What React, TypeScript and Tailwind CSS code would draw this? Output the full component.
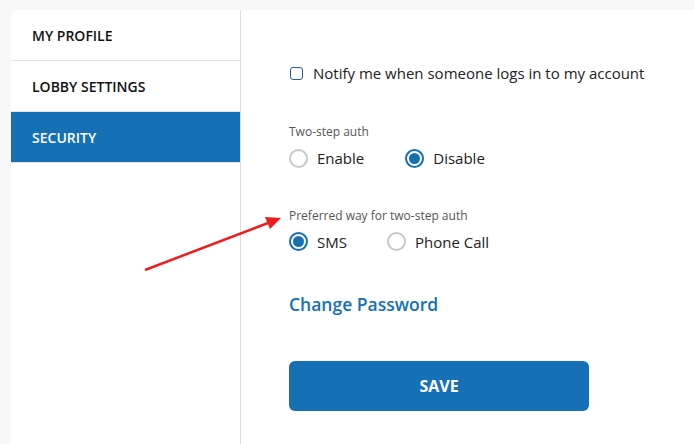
import React from "react";

const font = { fontFamily: '"Open Sans", "Noto Sans", sans-serif' };

function Radio({ checked, label, className = "" }: { checked: boolean; label: string; className?: string }) {
  return (
    <div className={`flex items-center ${className}`}>
      {checked ? (
        <span className="w-[19px] h-[19px] rounded-full border-2 border-[#1570b5] flex items-center justify-center">
          <span className="w-[11px] h-[11px] rounded-full bg-[#1570b5]" />
        </span>
      ) : (
        <span className="w-[19px] h-[19px] rounded-full border-2 border-[#c8c8c8]" />
      )}
      <span className="ml-[9px] text-[15px] text-[#222]">{label}</span>
    </div>
  );
}

export default function App() {
  return (
    <div className="relative w-[694px] h-[444px] bg-[#f8f8f8] overflow-hidden" style={font}>
      <div className="ml-[11px] mt-[10px] h-[434px] bg-white rounded-tl-[8px] flex">
        <div className="w-[230px] border-r border-[#dddddd] flex flex-col">
          <div className="h-[51px] border-b border-[#e2e2e2] flex items-center pl-[21px] text-[14px] font-semibold text-[#111]">MY PROFILE</div>
          <div className="h-[51px] border-b border-[#e2e2e2] flex items-center pl-[21px] text-[14px] font-semibold text-[#111]">LOBBY SETTINGS</div>
          <div className="h-[51px] border-b border-[#e2e2e2] bg-[#1570b5] flex items-center pl-[21px] text-[14px] font-semibold text-white">SECURITY</div>
        </div>
        <div className="flex-1 pl-[48px] pt-[52px] flex flex-col">
          <div className="flex items-center h-[22px]">
            <span className="w-[13px] h-[13px] ml-[1px] rounded-[3px] border-[1.5px] border-[#2a5d8f]" />
            <span className="ml-[10px] text-[15px] text-[#222]">Notify me when someone logs in to my account</span>
          </div>
          <div className="mt-[39px] text-[12px] text-[#555]">Two-step auth</div>
          <div className="mt-[6px] flex items-center">
            <Radio checked={false} label="Enable" />
            <Radio checked={true} label="Disable" className="ml-[41px]" />
          </div>
          <div className="mt-[37px] text-[12px] text-[#555]">Preferred way for two-step auth</div>
          <div className="mt-[6px] flex items-center">
            <Radio checked={true} label="SMS" />
            <Radio checked={false} label="Phone Call" className="ml-[40px]" />
          </div>
          <div className="mt-[38px] text-[17.5px] font-semibold text-[#1570b5]">Change Password</div>
          <button className="mt-[44px] w-[300px] h-[50px] rounded-[6px] bg-[#1570b5] text-white text-[16px] font-bold">SAVE</button>
        </div>
      </div>
      <svg className="absolute left-0 top-0 pointer-events-none" width="694" height="444">
        <line x1="145" y1="270" x2="268" y2="223" stroke="#ee1c1c" strokeWidth="2.5" />
        <polygon points="281,218 265,217 270,229" fill="#ee1c1c" />
      </svg>
    </div>
  );
}
